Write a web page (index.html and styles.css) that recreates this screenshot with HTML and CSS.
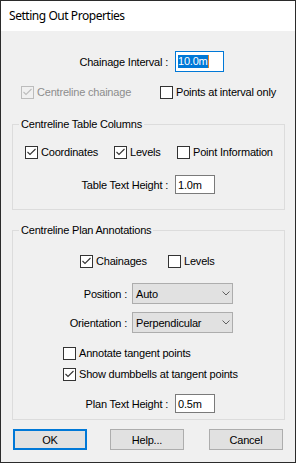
FILE: index.html
```html
<!DOCTYPE html>
<html>
<head>
<meta charset="utf-8">
<link rel="stylesheet" href="styles.css">
</head>
<body>
<div class="window">
  <div class="titlebar">Setting Out Properties</div>
  <div class="dialog">
    <div class="field row-interval">
      <span class="lbl lbl-top">Chainage Interval :</span>
      <div class="textbox tb-interval focused"><span class="sel">10.0m</span><span class="caret"></span></div>
    </div>

    <div class="cbrow row-top">
      <div class="check disabled w-centre">
        <span class="box"><svg width="11" height="11" viewBox="0 0 11 11"><polyline points="1.5,5 4,7.5 9.5,2" /></svg></span>
        <span class="cbtext">Centreline chainage</span>
      </div>
      <div class="check">
        <span class="box"></span>
        <span class="cbtext">Points at interval only</span>
      </div>
    </div>

    <div class="group g1">
      <div class="legend">Centreline Table Columns</div>
      <div class="cbrow row-cols">
        <div class="check w-coord">
          <span class="box"><svg width="11" height="11" viewBox="0 0 11 11"><polyline points="1.5,5 4,7.5 9.5,2" /></svg></span>
          <span class="cbtext">Coordinates</span>
        </div>
        <div class="check w-levels">
          <span class="box"><svg width="11" height="11" viewBox="0 0 11 11"><polyline points="1.5,5 4,7.5 9.5,2" /></svg></span>
          <span class="cbtext">Levels</span>
        </div>
        <div class="check">
          <span class="box"></span>
          <span class="cbtext">Point Information</span>
        </div>
      </div>
      <div class="field row-table">
        <span class="lbl lbl-in">Table Text Height :</span>
        <div class="textbox tb-small"><span>1.0m</span></div>
      </div>
    </div>

    <div class="group g2">
      <div class="legend">Centreline Plan Annotations</div>
      <div class="cbrow row-chain">
        <div class="check w-chain">
          <span class="box"><svg width="11" height="11" viewBox="0 0 11 11"><polyline points="1.5,5 4,7.5 9.5,2" /></svg></span>
          <span class="cbtext">Chainages</span>
        </div>
        <div class="check">
          <span class="box"></span>
          <span class="cbtext">Levels</span>
        </div>
      </div>
      <div class="field row-position">
        <span class="lbl lbl-combo">Position :</span>
        <div class="combo"><span>Auto</span><svg width="8" height="5" viewBox="0 0 8 5"><polyline points="0.5,0.5 4,4 7.5,0.5" /></svg></div>
      </div>
      <div class="field row-orient">
        <span class="lbl lbl-combo">Orientation :</span>
        <div class="combo"><span>Perpendicular</span><svg width="8" height="5" viewBox="0 0 8 5"><polyline points="0.5,0.5 4,4 7.5,0.5" /></svg></div>
      </div>
      <div class="cbrow row-annot">
        <div class="check">
          <span class="box"></span>
          <span class="cbtext">Annotate tangent points</span>
        </div>
      </div>
      <div class="cbrow row-dumb">
        <div class="check">
          <span class="box"><svg width="11" height="11" viewBox="0 0 11 11"><polyline points="1.5,5 4,7.5 9.5,2" /></svg></span>
          <span class="cbtext">Show dumbbells at tangent points</span>
        </div>
      </div>
      <div class="field row-plan">
        <span class="lbl lbl-in">Plan Text Height :</span>
        <div class="textbox tb-small"><span>0.5m</span></div>
      </div>
    </div>

    <div class="buttons">
      <div class="btn default">OK</div>
      <div class="btn btn-help">Help...</div>
      <div class="btn btn-cancel">Cancel</div>
    </div>
  </div>
</div>
</body>
</html>
```
FILE: styles.css
```css
* { box-sizing: border-box; }
body {
  margin: 0;
  background: #fff;
  font-family: "Liberation Sans", Arial, sans-serif;
  font-size: 11px;
  letter-spacing: -0.2px;
  color: #000;
}
.window {
  width: 296px;
  height: 463px;
  border: 1px solid #2b2b2b;
  display: flex;
  flex-direction: column;
}
.titlebar {
  height: 30px;
  flex: none;
  background: #fff;
  padding-left: 8px;
  font-family: "Noto Sans", "Open Sans", sans-serif;
  font-size: 12px;
  letter-spacing: -0.45px;
  line-height: 30px;
  color: #000;
}
.dialog {
  flex: 1;
  background: #f0f0f0;
  display: flex;
  flex-direction: column;
}

/* label + input rows */
.field { display: flex; align-items: center; }
.lbl { text-align: right; white-space: nowrap; }
.lbl-top { width: 167px; margin-right: 7px; }
.lbl-in { width: 155px; margin-right: 7px; }
.lbl-combo { width: 114px; margin-right: 5px; }

.row-interval { margin-top: 20px; height: 21px; }
.textbox {
  background: #fff;
  border: 1px solid #7a7a7a;
  display: flex;
  align-items: center;
  padding-left: 2px;
}
.tb-interval { width: 49px; height: 21px; }
.tb-small { width: 40px; height: 19px; }
.textbox.focused { border-color: #0078d7; }
.sel {
  background: #0078d7;
  color: #fff;
  line-height: 13px;
}
.caret {
  width: 1px;
  height: 13px;
  background: #e0812a;
}

/* checkboxes */
.cbrow { display: flex; height: 13px; }
.check { display: flex; align-items: center; height: 13px; flex: none; }
.box {
  width: 13px;
  height: 13px;
  border: 1px solid #333;
  background: #fff;
  display: flex;
  align-items: center;
  justify-content: center;
  flex: none;
}
.box svg polyline { fill: none; stroke: #333; stroke-width: 1.1; }
.cbtext { margin-left: 3px; line-height: 13px; white-space: nowrap; }
.check.disabled .box { border-color: #bcbcbc; background: #f0f0f0; }
.check.disabled .box svg polyline { stroke: #bcbcbc; }
.check.disabled .cbtext { color: #8d8d8d; }

.row-top { margin-top: 14px; padding-left: 20px; }
.w-centre { width: 139px; }

/* groups */
.group {
  margin-left: 11px;
  width: 273px;
  border: 1px solid #dcdcdc;
  display: flex;
  flex-direction: column;
}
.legend {
  margin: -7px 0 0 6px;
  padding: 0 2px;
  background: #f0f0f0;
  line-height: 13px;
  width: fit-content;
  white-space: nowrap;
}
.g1 { margin-top: 25px; padding-bottom: 15px; }
.g2 { margin-top: 20px; padding-bottom: 6px; }

.row-cols { margin-top: 15px; padding-left: 12px; }
.w-coord { width: 89px; }
.w-levels { width: 63px; }
.row-table { margin-top: 16px; height: 19px; }

.row-chain { margin-top: 18px; padding-left: 67px; }
.w-chain { width: 88px; }
.row-position { margin-top: 15px; height: 21px; }
.row-orient { margin-top: 8px; height: 21px; }
.combo {
  width: 101px;
  height: 21px;
  border: 1px solid #adadad;
  background: #e1e1e1;
  padding: 0 2px 0 3px;
  display: flex;
  align-items: center;
  justify-content: space-between;
}
.combo svg polyline { fill: none; stroke: #606060; stroke-width: 1; }
.row-annot { margin-top: 14px; padding-left: 50px; }
.row-dumb { margin-top: 8px; padding-left: 50px; }
.row-plan { margin-top: 13px; height: 19px; }

/* buttons */
.buttons { display: flex; margin-top: 9px; padding-left: 12px; }
.btn {
  width: 74px;
  height: 21px;
  border: 1px solid #adadad;
  background: #e1e1e1;
  display: flex;
  align-items: center;
  justify-content: center;
  flex: none;
}
.btn.default { border: 2px solid #0078d7; }
.btn-help { margin-left: 23px; }
.btn-cancel { margin-left: 25px; }
```
